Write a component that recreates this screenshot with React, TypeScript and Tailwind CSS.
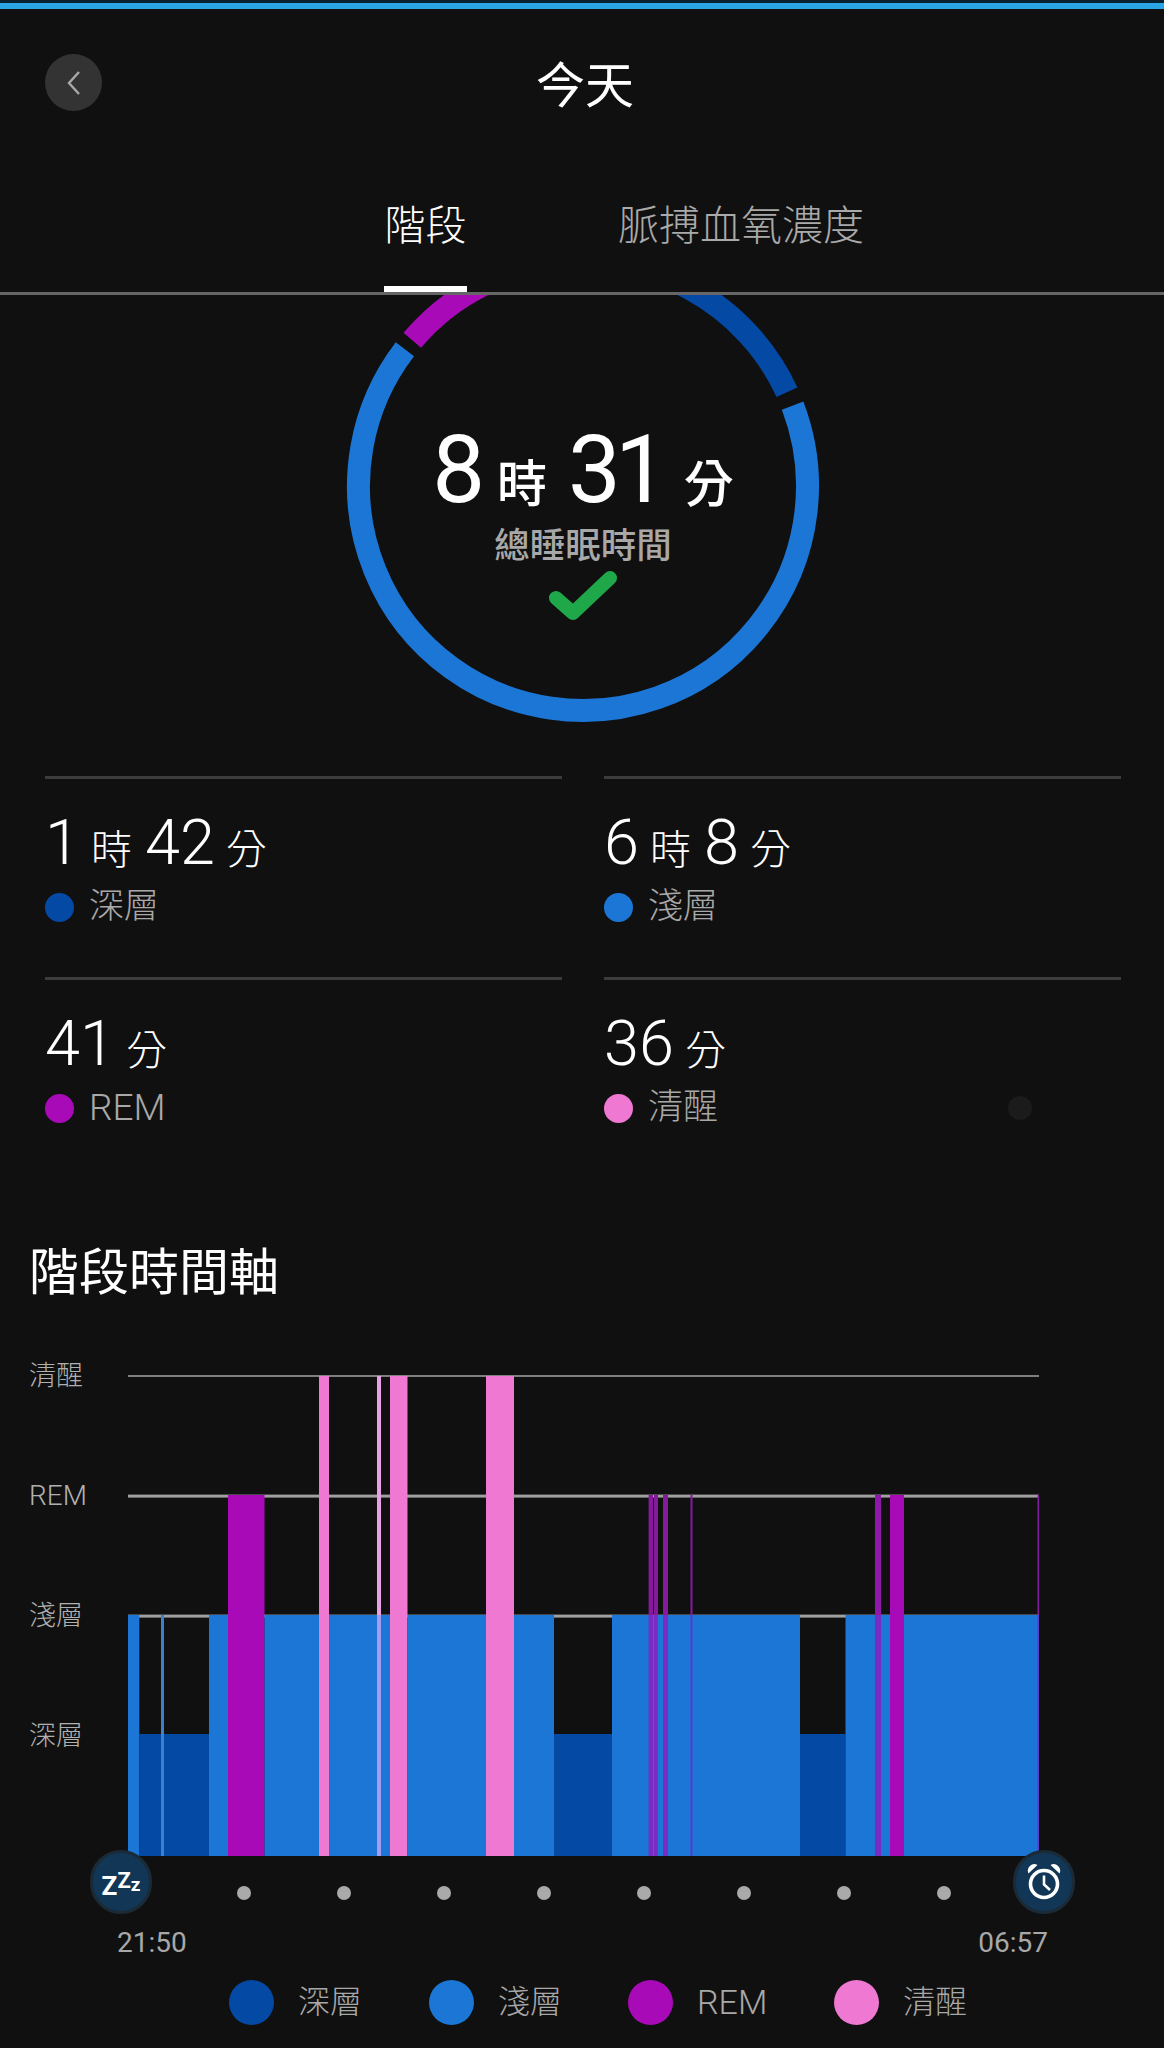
import React from "react";

const LIGHT = "#1b76d6";
const DEEP = "#0449a3";
const REM = "#a80ab8";
const PINK = "#ee78d2";

function arc(a0: number, a1: number) {
  const cx = 583, cy = 486, r = 224.5;
  const p = (a: number) => {
    const t = (a * Math.PI) / 180;
    return `${(cx + r * Math.sin(t)).toFixed(2)} ${(cy - r * Math.cos(t)).toFixed(2)}`;
  };
  const large = a1 - a0 > 180 ? 1 : 0;
  return `M ${p(a0)} A ${r} ${r} 0 ${large} 1 ${p(a1)}`;
}

const TOP_L = 1615, TOP_D = 1734, TOP_R = 1495, TOP_A = 1376, BOT = 1856;
type Bar = [number, number, number, string];
const bars: Bar[] = [
  [128, 139.3, TOP_L, LIGHT],
  [139.3, 161, TOP_D, DEEP],
  [161, 164, TOP_L, "#3f80cc"],
  [164, 209, TOP_D, DEEP],
  [209, 228, TOP_L, LIGHT],
  [228, 264.5, TOP_R, REM],
  [264.5, 319, TOP_L, LIGHT],
  [319, 329, TOP_A, PINK],
  [329, 377, TOP_L, LIGHT],
  [381, 390, TOP_L, LIGHT],
  [390, 407.5, TOP_A, PINK],
  [407.5, 486, TOP_L, LIGHT],
  [486, 514, TOP_A, PINK],
  [514, 554, TOP_L, LIGHT],
  [554, 612, TOP_D, DEEP],
  [612, 800, TOP_L, LIGHT],
  [800, 845.5, TOP_D, DEEP],
  [845.5, 1039, TOP_L, LIGHT],
];
const thinRem: [number, number][] = [
  [648.6, 653],
  [654, 658],
  [663, 668],
  [690.5, 692.5],
  [875, 881],
  [1037.5, 1039],
];

function Stat({ value, color, label, extra, wide }: { value: [string, string][]; color: string; label: string; extra?: boolean; wide?: boolean }) {
  return (
    <div className="relative h-[201px] border-t-[3px] border-[#3c3c3c] pt-[33px]">
      <div className="flex h-[62px] items-baseline">
        {value.map(([n, u], i) => (
          <React.Fragment key={i}>
            <span className="text-[63px] leading-[62px] font-light text-white">{n}</span>
            <span className="ml-[11px] mr-[13px] text-[41px] leading-[62px] font-light text-white">{u}</span>
          </React.Fragment>
        ))}
      </div>
      <div className="mt-[13px] flex h-[40px] items-center">
        <span className="h-[29px] w-[29px] rounded-full" style={{ backgroundColor: color }} />
        <span className={`ml-[15px] leading-[40px] font-light text-[#a8a8a8] ${wide ? "text-[37px]" : "text-[35px]"}`}>{label}</span>
        {extra && <span className="ml-[290px] h-[24px] w-[24px] rounded-full bg-[#1b1b1b]" />}
      </div>
    </div>
  );
}

function Legend({ color, label, w, wide }: { color: string; label: string; w: string; wide?: boolean }) {
  return (
    <div className={`flex items-center ${w}`}>
      <span className="h-[45px] w-[45px] rounded-full" style={{ backgroundColor: color }} />
      <span className={`ml-[24px] leading-[45px] font-light text-[#a8a8a8] ${wide ? "text-[34px]" : "text-[32px]"}`}>{label}</span>
    </div>
  );
}

export default function App() {
  return (
    <div
      className="h-[2048px] w-[1164px] overflow-hidden bg-[#101010]"
      style={{ fontFamily: '"Roboto","Noto Sans CJK TC",sans-serif' }}
    >
      <div className="h-[3px] bg-[#08202f]" />
      <div className="h-[6px] bg-[#2aa4e4]" />

      <div className="relative h-[142px]">
        <button className="absolute left-[45px] top-[45px] flex h-[57px] w-[57px] items-center justify-center rounded-full bg-[#333333]">
          <svg width="18" height="26" viewBox="0 0 18 26" fill="none">
            <path d="M14 2 L4 13 L14 24" stroke="#a9a9a9" strokeWidth="2.4" />
          </svg>
        </button>
        <div className="pt-[46px] pl-[6px] text-center text-[49px] leading-[64px] text-white">今天</div>
      </div>

      <div className="flex h-[144px] items-end border-b-[3px] border-[#666666] pl-[384px]">
        <div className="h-[144px] w-[83px] border-b-[6px] border-white pt-[48px] text-center text-[41px] leading-[60px] font-light whitespace-nowrap text-white">
          階段
        </div>
        <div className="ml-[151px] h-[144px] pt-[48px] text-[41px] leading-[60px] font-light whitespace-nowrap text-[#aaaaaa]">
          脈搏血氧濃度
        </div>
      </div>

      <div className="relative h-[481px]">
        <svg className="absolute left-0 top-0" width="1164" height="440" viewBox="0 295 1164 440" fill="none">
          <path d={arc(69, 307.5)} stroke={LIGHT} strokeWidth="23" />
          <path d={arc(-49.5, -15)} stroke={REM} strokeWidth="23" />
          <path d={arc(-8, 65.3)} stroke={DEEP} strokeWidth="23" />
          <path
            d="M556 598 L573 613 L610 578"
            stroke="#1fa84a"
            strokeWidth="14"
            strokeLinejoin="round"
            strokeLinecap="round"
          />
        </svg>
        <div className="relative flex flex-col items-center pt-[127px] pl-[2px]">
          <div className="flex h-[96px] items-baseline text-white">
            <span className="text-[94px] leading-[96px]">8</span>
            <span className="ml-[12px] mr-[21px] text-[50px] leading-[96px] font-medium">時</span>
            <span className="text-[94px] leading-[96px] tracking-[-6px]">31</span>
            <span className="ml-[22px] text-[50px] leading-[96px] font-medium">分</span>
          </div>
          <div className="mt-[3px] text-[35.5px] leading-[50px] font-medium text-[#a8a8a8]">總睡眠時間</div>
        </div>
      </div>

      <div className="grid grid-cols-2 gap-x-[42px] pl-[45px] pr-[43px]">
        <Stat value={[["1", "時"], ["42", "分"]]} color={DEEP} label="深層" />
        <Stat value={[["6", "時"], ["8", "分"]]} color={LIGHT} label="淺層" />
        <Stat value={[["41", "分"]]} color={REM} label="REM" wide />
        <Stat value={[["36", "分"]]} color={PINK} label="清醒" extra />
      </div>

      <div className="mt-[63px] pl-[29px] text-[50px] leading-[64px] font-normal text-white">階段時間軸</div>

      <div className="mt-[70px] flex items-start">
        <div className="w-[128px] pl-[29px] text-[27px] leading-[32px] font-light text-[#b0b0b0]">
          <div className="-mt-[15px] h-[120px]">清醒</div>
          <div className="h-[120px] text-[28px]">REM</div>
          <div className="h-[120px]">淺層</div>
          <div className="h-[120px]">深層</div>
        </div>
        <svg width="911" height="482" viewBox="128 1375 911 482">
          <rect x="128" y="1375.2" width="911" height="1.6" fill="#9a9a9a" />
          <rect x="128" y="1494.6" width="911" height="3" fill="#a0a0a0" />
          <rect x="128" y="1614.6" width="911" height="3" fill="#a0a0a0" />
          {bars.map(([a, b, top, c], i) => (
            <rect key={i} x={a} y={top} width={b - a} height={BOT - top} fill={c} />
          ))}
          <rect x="377" y={TOP_A} width="4" height={TOP_L - TOP_A} fill="#e9a0e0" />
          <rect x="377" y={TOP_L} width="4" height={BOT - TOP_L} fill="#a49cf2" />
          {thinRem.map(([a, b], i) => (
            <g key={i}>
              <rect x={a} y={TOP_R} width={b - a} height={TOP_L - TOP_R} fill={i === 4 ? "#8e18a8" : "#861a9c"} />
              <rect x={a} y={TOP_L} width={b - a} height={BOT - TOP_L} fill={i >= 3 && i !== 4 ? "#5a3ccc" : "#7a2bc2"} />
            </g>
          ))}
          <rect x="890" y={TOP_R} width="14" height={BOT - TOP_R} fill={REM} />
        </svg>
      </div>

      <div className="relative -mt-[7px] flex items-start pl-[90px]">
        <div className="relative flex h-[64px] w-[62px] items-center justify-center rounded-full border-[3px] border-[#1a2a36] bg-[#123655] font-bold text-white">
          <span className="text-[26px] leading-[25px] mt-[8px]">Z</span>
          <span className="text-[22px] leading-[21px] -mt-[3px]">Z</span>
          <span className="text-[19px] leading-[17px] mt-[5px]">z</span>
        </div>
        <div className="ml-[85px] mt-[36px] flex gap-[86px]">
          {[0, 1, 2, 3, 4, 5, 6, 7].map((i) => (
            <span key={i} className="h-[14px] w-[14px] rounded-full bg-[#aaaaaa]" />
          ))}
        </div>
        <div className="ml-[62px] flex h-[64px] w-[62px] items-center justify-center rounded-full border-[3px] border-[#1a2a36] bg-[#123655]">
          <svg width="36" height="38" viewBox="0 0 36 38" fill="none">
            <circle cx="18" cy="21" r="13.5" stroke="#ffffff" strokeWidth="3.6" />
            <path d="M18 12.5 V21.5 L24 27" stroke="#ffffff" strokeWidth="2.6" />
            <path d="M2.5 10.5 A6.5 6.5 0 0 1 11.5 2 Z" fill="#ffffff" />
            <path d="M33.5 10.5 A6.5 6.5 0 0 0 24.5 2 Z" fill="#ffffff" />
          </svg>
        </div>
      </div>

      <div className="mt-[11px] flex justify-between pl-[117px] pr-[116px] text-[28px] leading-[36px] text-[#a8a8a8]">
        <span>21:50</span>
        <span>06:57</span>
      </div>

      <div className="mt-[19px] flex pl-[229px]">
        <Legend color={DEEP} label="深層" w="w-[200px]" />
        <Legend color={LIGHT} label="淺層" w="w-[199px]" />
        <Legend color={REM} label="REM" w="w-[206px]" wide />
        <Legend color={PINK} label="清醒" w="w-[140px]" />
      </div>
    </div>
  );
}
